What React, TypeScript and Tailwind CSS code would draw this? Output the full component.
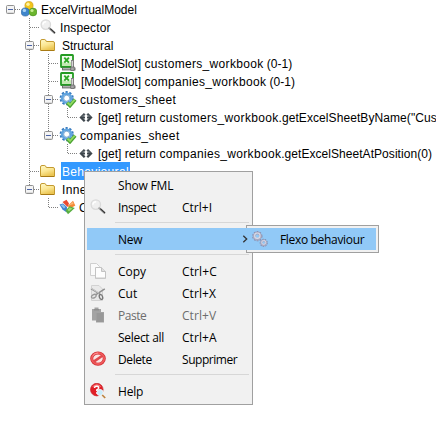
import type { ReactNode } from "react";

type GuideKind = "none" | "line" | "tee" | "end" | "root" | "teeBox" | "endBox";

function Guide({ kind }: { kind: GuideKind }) {
  const down = kind === "line" || kind === "tee" || kind === "teeBox";
  const up = kind !== "none" && kind !== "root";
  const right = kind !== "none" && kind !== "line";
  const box = kind === "root" || kind === "teeBox" || kind === "endBox";
  return (
    <svg className="h-[18px] w-[19px] shrink-0 overflow-visible" viewBox="0 0 19 18" fill="none">
      <g stroke="#808080" strokeDasharray="1 1">
        {up && <path d={down ? "M9.5 0V18" : "M9.5 0V9"} />}
        {right && <path d="M10 9.5H20" />}
      </g>
      {box && (
        <>
          <rect x="5.5" y="5.5" width="8" height="8" rx="1" fill="#f4f4f4" stroke="#919191" />
          <path d="M6 12.5H13" stroke="#dcdcdc" />
          <path d="M7 9.5H12" stroke="#4b63a7" />
        </>
      )}
    </svg>
  );
}

function Balls() {
  return (
    <svg className="size-4" viewBox="0 0 16 16">
      <circle cx="8" cy="4.6" r="4.1" fill="#f2c51c" stroke="#c9971a" strokeWidth=".6" />
      <circle cx="4.3" cy="11" r="4.1" fill="#3f86cc" stroke="#2a62a0" strokeWidth=".6" />
      <circle cx="12" cy="11" r="3.9" fill="#6cb52e" stroke="#458f1c" strokeWidth=".6" />
      <circle cx="7" cy="3.3" r="1.7" fill="#fff3a0" />
      <circle cx="3.4" cy="9.4" r="1.7" fill="#a9d3f4" />
      <circle cx="11" cy="9.5" r="1.6" fill="#c5ec91" />
    </svg>
  );
}

function Magnifier() {
  return (
    <svg className="size-4" viewBox="0 0 16 16">
      <circle cx="5.8" cy="5.6" r="4.7" fill="#efefef" stroke="#dadada" strokeWidth="1.3" />
      <path d="M2.8 5.8a3.4 3.4 0 0 1 3.4-3.1" stroke="#fff" strokeWidth="1.5" fill="none" />
      <path d="M9.3 9.3 14.3 13.8" stroke="#a5a5a5" strokeWidth="2.2" strokeLinecap="round" />
      <path d="M10.3 9.7 15 14" stroke="#333" strokeWidth="1.1" />
    </svg>
  );
}

function Folder() {
  return (
    <svg className="h-4 w-[15px]" viewBox="0 0 15 16">
      <defs>
        <linearGradient id="folderFill" x1="0" y1="0" x2="0.4" y2="1">
          <stop offset="0" stopColor="#fff9c8" />
          <stop offset=".55" stopColor="#fbe794" />
          <stop offset="1" stopColor="#ebc552" />
        </linearGradient>
      </defs>
      <path d="M.5 13.5V4Q.5 2.5 2 2.5H4.8Q5.7 2.5 6.3 4.5H13Q14.5 4.5 14.5 6V13.5Z" fill="url(#folderFill)" stroke="#c39a30" />
      <path d="M1 13.5H14" stroke="#a87a14" />
    </svg>
  );
}

function ExcelSlot() {
  return (
    <svg className="h-[17px] w-4" viewBox="0 0 16 17">
      <rect x="1" y="1" width="12" height="12" rx=".6" fill="#f1fced" stroke="#239b22" strokeWidth="1.8" />
      <path d="M2 12V8Q7 10.5 12 7.5V12Z" fill="#c3eab2" />
      <path d="M4.3 3.6 8.9 8.6M8.9 3.6 4.3 8.6" stroke="#2fa826" strokeWidth="1.9" />
      <path d="M12.5 6V13" stroke="#808080" strokeWidth="3" />
      <path d="M12.3 7V13" stroke="#e0e0e0" strokeWidth="1.2" />
      <path d="M2 15H15.5" stroke="#6e6e6e" strokeWidth="2.8" />
      <path d="M3 14.8H15" stroke="#cfcfcf" strokeWidth="1" />
      <rect x="10.8" y="13" width="3.4" height="3.6" fill="#a5a5a5" stroke="#555" strokeWidth=".6" />
    </svg>
  );
}

function GearCheck() {
  return (
    <svg className="h-[17px] w-[18px]" viewBox="0 0 18 17">
      <circle cx="7.7" cy="7.2" r="6" fill="none" stroke="#3478bd" strokeWidth="2.2" strokeDasharray="2.2 1.57" />
      <circle cx="7.7" cy="7.2" r="4.5" fill="#fff" stroke="#62a5df" strokeWidth="2.6" />
      <circle cx="7.7" cy="7.2" r="3" fill="#fff" stroke="#3679b8" strokeWidth=".6" />
      <path d="M8.2 11.7 11 14.6 16.2 8.6" fill="none" stroke="#4da332" strokeWidth="3.6" />
      <path d="M8.6 11.6 11 14 15.8 8.5" fill="none" stroke="#92dc63" strokeWidth="1.8" />
    </svg>
  );
}

function GetArrows() {
  return (
    <svg className="h-4 w-3.5" viewBox="0 0 14 16" fill="none">
      <path d="M5.7 4.7 2 8.5l3.7 3.8M8.3 4.7 12 8.5l-3.7 3.8" stroke="#3e464c" strokeWidth="2.3" />
      <path d="M3 8.5H6M8 8.5H11" stroke="#3e464c" strokeWidth="1.8" />
      <path d="M3 7.7 5 5.7M9 5.7l2 2" stroke="#a6b2b8" strokeWidth=".6" />
    </svg>
  );
}

function ConceptCubes() {
  return (
    <svg className="h-4 w-[17px]" viewBox="0 0 17 16">
      <path d="M.5 5.5 4 4.5 8 8 7.8 13.5 3.5 10.5Z" fill="#3f80cf" />
      <path d="M1.5 6 4 5.3 6.5 8 5 9.5Z" fill="#8dc3ed" />
      <path d="M3.5 3 7.5.8 10 4.5 8.5 8Z" fill="#e94a32" />
      <path d="M8.5 7 14 1.8 16.3 6.5 11.5 9.5Z" fill="#f58a35" />
      <path d="M9.5 6.5 13.6 3 14.6 5Z" fill="#fbb878" />
      <path d="M6.5 11.5 10.5 7.2 15.8 9 9 15.3Z" fill="#58ae40" />
      <path d="M8.5 11 10.8 8.5 13.5 9.5 10 12.3Z" fill="#a0dd78" />
    </svg>
  );
}

function CopyIcon() {
  return (
    <svg className="size-4" viewBox="0 0 16 16">
      <path d="M.5.5H6.5L9.5 3.5V12.5H.5Z" fill="#fafafa" stroke="#cfcfcf" />
      <path d="M5.5 4.5H11.5L15.5 8.5V15.5H5.5Z" fill="#fdfdfd" stroke="#c3c3c3" />
      <path d="M11.5 4.5V8.5H15.5" fill="#e0e0e0" stroke="#c3c3c3" />
      <path d="M6 14.8H15" stroke="#d8d8d8" />
    </svg>
  );
}

function CutIcon() {
  return (
    <svg className="size-4" viewBox="0 0 16 16" fill="none">
      <path d="M1.5.5H9L12.5 4V15.5H1.5Z" fill="#e9e9e9" stroke="#d2d2d2" />
      <path d="M1 3.5 10.3 9.3M14.8 3.8 5.5 9.8" stroke="#8f8f8f" strokeWidth="1.5" />
      <path d="M1 3.2 9 8.2" stroke="#e5e5e5" strokeWidth=".7" />
      <ellipse cx="3.8" cy="11.2" rx="2.5" ry="1.6" transform="rotate(-30 3.8 11.2)" stroke="#999" strokeWidth="1.3" />
      <ellipse cx="11" cy="12" rx="1.6" ry="2.5" transform="rotate(-20 11 12)" stroke="#777" strokeWidth="1.3" />
    </svg>
  );
}

function PasteIcon() {
  return (
    <svg className="size-4" viewBox="0 0 16 16">
      <path d="M2 2H4.5V.5H8.5V2H11V5H14V15.5H6V13.5H2Z" fill="#a3a3a3" />
      <path d="M4 2H9V3.5H4Z" fill="#8e8e8e" />
      <path d="M6.5 6H13.5V15H6.5Z" fill="#989898" />
    </svg>
  );
}

function DeleteIcon() {
  return (
    <svg className="size-4" viewBox="0 0 16 16" fill="none">
      <ellipse cx="8" cy="7.6" rx="6.3" ry="5.6" fill="#fbe4e4" stroke="#cf2d32" strokeWidth="3" />
      <ellipse cx="8" cy="7.5" rx="6.2" ry="5.5" stroke="#f05a5c" strokeWidth="1.8" />
      <path d="M3.8 10.6 12.3 4.7" stroke="#e04a4d" strokeWidth="2.6" />
      <path d="M2.5 5Q4.5 2 8 2" stroke="#ffa5a5" strokeWidth=".8" />
    </svg>
  );
}

function HelpIcon() {
  return (
    <svg className="size-4" viewBox="0 0 16 16" fill="none">
      <circle cx="6.8" cy="6.6" r="6.3" fill="#e11f27" stroke="#c5272c" strokeWidth=".7" />
      <path d="M2 4Q4 1 7 1.2 10 1.4 11.4 4 7 2.5 2 4Z" fill="#f87878" />
      <path d="M4.4 5Q4.7 3.1 6.8 3.2 9 3.4 8.6 5.2 8.2 6.2 6.8 7V8M6.8 9.3V10.8" stroke="#fff" strokeWidth="1.5" />
      <circle cx="10" cy="9.5" r="3" fill="#c8ecfb" stroke="#eef5f7" strokeWidth="1" />
      <path d="M12.2 12 15.2 15" stroke="#bd8440" strokeWidth="1.7" />
    </svg>
  );
}

function Gears() {
  return (
    <svg className="size-4" viewBox="0 0 16 16" fill="none">
      <circle cx="5.3" cy="5.2" r="4.4" stroke="#8589aa" strokeWidth="1.5" strokeDasharray="1.7 1.1" />
      <circle cx="5.3" cy="5.2" r="3.1" stroke="#a8aac2" strokeWidth="2.7" />
      <circle cx="5.3" cy="4.7" r="2.7" stroke="#d9dbe7" strokeWidth="1.1" />
      <circle cx="11.7" cy="11.8" r="3.3" stroke="#7d83a5" strokeWidth="1.4" strokeDasharray="1.4 .9" />
      <circle cx="11.7" cy="11.8" r="2.3" stroke="#a6a9c2" strokeWidth="2.2" />
      <circle cx="11.7" cy="11.4" r="2" stroke="#dcdeea" strokeWidth=".9" />
    </svg>
  );
}

interface TreeRowProps {
  guides: GuideKind[];
  icon: ReactNode;
  iconBox: string;
  label: ReactNode;
  selected?: boolean;
}

function TreeRow({ guides, icon, iconBox, label, selected = false }: TreeRowProps) {
  return (
    <div className="flex h-[18px] items-center pl-px">
      {guides.map((kind, i) => (
        <Guide key={i} kind={kind} />
      ))}
      <span className={`flex shrink-0 items-center ${iconBox}`}>{icon}</span>
      <span className={`h-[18px] pt-px leading-[18px] ${selected ? "-ml-px bg-[#3399ff] pr-px pl-px text-white" : ""}`}>
        {label}
      </span>
    </div>
  );
}

function Wide({ children }: { children: ReactNode }) {
  return <span className="tracking-[0.32px]">{children}</span>;
}

const tree: TreeRowProps[] = [
  { guides: ["root"], icon: <Balls />, iconBox: "w-[21px] pl-px", label: "ExcelVirtualModel" },
  {
    guides: ["none", "tee"],
    icon: <Magnifier />,
    iconBox: "w-[21px] pl-px",
    label: <span className="tracking-[0.15px]">Inspector</span>,
  },
  { guides: ["none", "teeBox"], icon: <Folder />, iconBox: "w-[23px] pl-px", label: "Structural" },
  {
    guides: ["none", "line", "tee"],
    icon: <ExcelSlot />,
    iconBox: "w-[23px] pl-[2px] pb-[2px]",
    label: <>[ModelSlot] <Wide>customers_workbook</Wide> (0-1)</>,
  },
  {
    guides: ["none", "line", "tee"],
    icon: <ExcelSlot />,
    iconBox: "w-[23px] pl-[2px] pb-[2px]",
    label: <>[ModelSlot] <Wide>companies_workbook</Wide> (0-1)</>,
  },
  { guides: ["none", "line", "teeBox"], icon: <GearCheck />, iconBox: "w-[22px] pl-px", label: <Wide>customers_sheet</Wide> },
  {
    guides: ["none", "line", "line", "end"],
    icon: <GetArrows />,
    iconBox: "w-[21px] pl-[2px]",
    label: <>[get] return <Wide>customers_workbook</Wide><span className="tracking-[0.08px]">.getExcelSheetByName("Customers")</span></>,
  },
  { guides: ["none", "line", "endBox"], icon: <GearCheck />, iconBox: "w-[22px] pl-px", label: <span className="tracking-[0.37px]">companies_sheet</span> },
  {
    guides: ["none", "line", "none", "end"],
    icon: <GetArrows />,
    iconBox: "w-[21px] pl-[2px]",
    label: <>[get] return <Wide>companies_workbook</Wide><span className="tracking-[0.05px]">.getExcelSheetAtPosition(0)</span></>,
  },
  { guides: ["none", "tee"], icon: <Folder />, iconBox: "w-[23px] pl-px", label: <Wide>Behavioural</Wide>, selected: true },
  { guides: ["none", "endBox"], icon: <Folder />, iconBox: "w-[23px] pl-px", label: <Wide>Inner</Wide> },
  { guides: ["none", "none", "end"], icon: <ConceptCubes />, iconBox: "w-[21px] pl-px", label: "C" },
];

interface ItemProps {
  label: string;
  shortcut?: string;
  icon?: ReactNode;
  active?: boolean;
  disabled?: boolean;
  tracking?: string;
  shortcutTracking?: string;
}

function MenuItem({ label, shortcut, icon, active = false, disabled = false, tracking = "", shortcutTracking = "" }: ItemProps) {
  return (
    <div className={`flex h-[22px] items-center ${active ? "bg-[#91c9f7]" : ""} ${disabled ? "text-[#6d6d6d]" : "text-black"}`}>
      <span className="flex w-[31px] shrink-0 pl-[3px]">{icon}</span>
      <span className={`w-16 shrink-0 pt-0.5 whitespace-nowrap ${tracking}`}>{label}</span>
      <span className={`pt-0.5 ${shortcutTracking}`}>{shortcut}</span>
    </div>
  );
}

function Separator() {
  return <div className="mt-1 mr-px mb-[5px] ml-7 h-px bg-[#d7d7d7]" />;
}

export default function App() {
  return (
    <div className="relative h-[422px] w-[436px] overflow-hidden bg-white font-['Liberation_Sans',Arial,sans-serif] text-[12px] whitespace-nowrap text-black">
      <div className="flex flex-col">
        {tree.map((row, i) => (
          <TreeRow key={i} {...row} />
        ))}
      </div>
      <div className="absolute top-[171px] left-[84px] w-[169px] border border-[#a0a0a0] bg-[#f1f1f1] p-[2px] font-['Open_Sans','Noto_Sans',sans-serif]">
        <MenuItem label="Show FML" tracking="tracking-[-0.2px]" />
        <MenuItem label="Inspect" shortcut="Ctrl+I" icon={<Magnifier />} tracking="tracking-[-0.35px]" />
        <Separator />
        <MenuItem label="New" active tracking="tracking-[-0.2px]" />
        <Separator />
        <MenuItem label="Copy" shortcut="Ctrl+C" icon={<CopyIcon />} shortcutTracking="tracking-[0.1px]" />
        <MenuItem label="Cut" shortcut="Ctrl+X" icon={<CutIcon />} shortcutTracking="tracking-[0.05px]" />
        <MenuItem label="Paste" shortcut="Ctrl+V" icon={<PasteIcon />} disabled tracking="tracking-[-0.45px]" shortcutTracking="tracking-[0.05px]" />
        <MenuItem label="Select all" shortcut="Ctrl+A" tracking="tracking-[-0.3px]" shortcutTracking="tracking-[0.05px]" />
        <MenuItem label="Delete" shortcut="Supprimer" icon={<DeleteIcon />} tracking="tracking-[-0.4px]" shortcutTracking="tracking-[-0.45px]" />
        <Separator />
        <MenuItem label="Help" icon={<HelpIcon />} tracking="tracking-[-0.2px]" />
      </div>
      <div className="absolute top-[225px] left-[246px] w-[133px] border border-[#a0a0a0] bg-[#f1f1f1] py-[2px] pr-[2px] font-['Open_Sans','Noto_Sans',sans-serif]">
        <div className="-ml-[5px] flex h-[22px] items-center bg-[#91c9f7]">
          <svg className="h-2 w-[6px]" viewBox="0 0 6 8" fill="none">
            <path d="M1.3.8 4.7 4 1.3 7.2" stroke="#333" strokeWidth="1.3" />
          </svg>
          <span className="flex w-8 pl-1">
            <Gears />
          </span>
          <span className="pt-0.5 tracking-[-0.33px]">Flexo behaviour</span>
        </div>
      </div>
    </div>
  );
}
